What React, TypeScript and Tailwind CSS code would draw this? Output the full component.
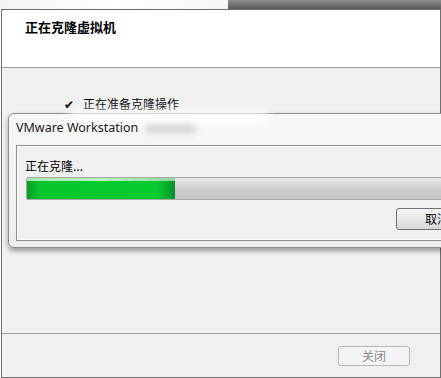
import React from "react";

export default function App() {
  const cjk = { fontFamily: '"Noto Sans CJK SC", "Noto Sans", sans-serif' };
  return (
    <div
      className="relative w-[441px] h-[378px] overflow-hidden bg-white"
      style={cjk}
    >
      {/* background strip above window */}
      <div className="flex h-[9px]">
        <div className="w-[228px] bg-gradient-to-r from-[#f4f4f4] via-[#ffffff] to-[#f6f6f6]" />
        <div className="flex-1 bg-gradient-to-b from-[#8e8e8e] to-[#5a5a5a]" />
      </div>

      {/* main wizard window */}
      <div className="ml-[1px] w-[440px] h-[369px] border border-[#6e6e6e] flex flex-col">
        <div className="h-[58px] bg-white border-b border-[#a0a0a0] pl-[23px] pt-[9px]">
          <div className="text-[13px] leading-[16px] font-bold text-black">正在克隆虚拟机</div>
        </div>
        <div className="h-[266px] bg-[#f0f0f0] border-b border-[#a0a0a0] pl-[62px] pt-[29px]">
          <div className="flex items-center gap-[7px] text-[12px] leading-[14px] text-black">
            <span className="text-[12px] w-[12px]">✔</span>
            <span>正在准备克隆操作</span>
          </div>
        </div>
        <div className="flex-1 bg-[#f0f0f0] flex justify-end items-start pt-[12px] pr-[30px]">
          <div className="w-[72px] h-[20px] border border-[#b5b8bb] rounded-[3px] bg-[#f4f4f4] flex items-center justify-center text-[12px] text-[#8a8a8a]">
            关闭
          </div>
        </div>
      </div>

      {/* overlay progress dialog */}
      <div className="absolute left-[8px] top-[113px] w-[450px] h-[135px] rounded-[6px] border border-[#8c8c8c] bg-gradient-to-b from-[#f7f7f7] to-[#eeeeee] shadow-[0_3px_5px_rgba(0,0,0,0.35)]">
        <div className="absolute left-[60px] top-[-4px] w-[200px] h-[14px] bg-white/80 blur-[5px]" />
        <div className="relative flex items-center h-[32px] pl-[7px] pb-[3px]">
          <span
            className="text-[12.5px] text-[#1a1a1a]"
            style={{ fontFamily: '"Noto Sans", "Open Sans", sans-serif' }}
          >
            VMware Workstation
          </span>
          <span className="ml-[8px] w-[50px] h-[8px] rounded-full bg-[#b0b0b0]/50 blur-[3px]" />
        </div>
        <div className="absolute left-[7px] top-[31px] w-[450px] h-[96px] border border-[#8e8e8e] bg-[#f0f0f0] shadow-[inset_0_0_0_1px_#ffffff]">
          <div className="pl-[8px] pt-[13px] text-[12px] leading-[14px] text-black">正在克隆...</div>
          <div className="ml-[9px] mt-[4px] h-[23px] border border-[#a8a8a8] rounded-[2px] bg-gradient-to-b from-[#e9e9e9] via-[#cdcdcd] to-[#c6c6c6] flex">
            <div className="w-[148px] h-full bg-[linear-gradient(to_right,#0c9a2a_0%,#07c52d_8%,#06cc2e_88%,#088f29_100%)]">
              <div className="h-[3px] bg-gradient-to-r from-[#a7e8b1] via-[#b6f0c0] to-[#8fd89b]" />
            </div>
          </div>
          <div className="flex pl-[379px] mt-[8px]">
            <div className="shrink-0 w-[82px] h-[22px] border border-[#707070] rounded-[3px] bg-gradient-to-b from-[#f4f4f4] via-[#e8e8e8] to-[#d6d6d6] flex items-center justify-center text-[12px] text-black">
              取消
            </div>
          </div>
        </div>
      </div>
    </div>
  );
}
